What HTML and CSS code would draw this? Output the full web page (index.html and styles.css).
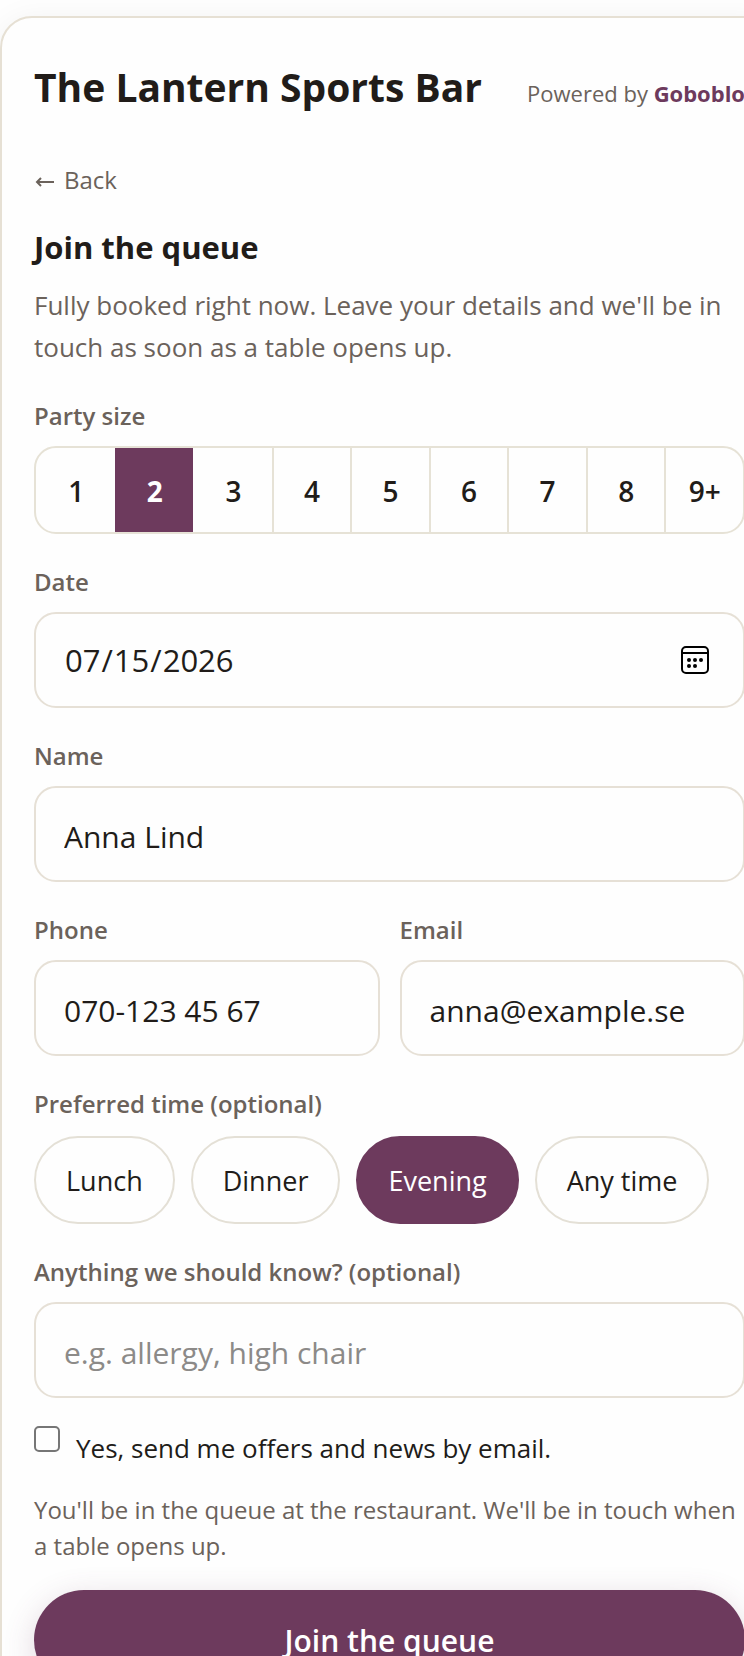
FILE: index.html
```html
<!DOCTYPE html>
<html lang="en">
  <head>
    <meta charset="UTF-8" />
    <meta name="viewport" content="width=device-width, initial-scale=1.0" />
    <title>Join the queue - The Lantern Sports Bar</title>
    <link rel="stylesheet" href="styles.css">
  </head>
  <body>
    <main class="card">
      <header class="card-header">
        <h1>The Lantern Sports Bar</h1>
        <p class="powered">Powered by <a href="#">Goboblo</a></p>
      </header>

      <button type="button" class="back-btn">
        <svg width="20" height="16" viewBox="0 0 20 16" fill="none" stroke="currentColor" stroke-width="2" aria-hidden="true">
          <path d="M20 10H3M7 6l-4 4 4 4" />
        </svg>
        Back
      </button>

      <h2>Join the queue</h2>
      <p class="intro">
        Fully booked right now. Leave your details and we'll be in touch as
        soon as a table opens up.
      </p>

      <form id="queueForm">
        <div class="field" role="group" aria-labelledby="partyLabel">
          <span class="label" id="partyLabel">Party size</span>
          <div class="party">
            <button type="button">1</button>
            <button type="button" class="active" aria-pressed="true">2</button>
            <button type="button">3</button>
            <button type="button">4</button>
            <button type="button">5</button>
            <button type="button">6</button>
            <button type="button">7</button>
            <button type="button">8</button>
            <button type="button">9+</button>
          </div>
        </div>

        <div class="field">
          <label class="label" for="date">Date</label>
          <input type="date" id="date" name="date" value="2026-07-15" />
        </div>

        <div class="field">
          <label class="label" for="name">Name</label>
          <input type="text" id="name" name="name" value="Anna Lind" />
        </div>

        <div class="row">
          <div class="field">
            <label class="label" for="phone">Phone</label>
            <input type="tel" id="phone" name="phone" value="070-123 45 67" />
          </div>
          <div class="field">
            <label class="label" for="email">Email</label>
            <input type="email" id="email" name="email" value="anna@example.se" />
          </div>
        </div>

        <div class="field" role="group" aria-labelledby="timeLabel">
          <span class="label" id="timeLabel">Preferred time (optional)</span>
          <div class="chips">
            <button type="button">Lunch</button>
            <button type="button">Dinner</button>
            <button type="button" class="active" aria-pressed="true">Evening</button>
            <button type="button">Any time</button>
          </div>
        </div>

        <div class="field">
          <label class="label" for="note">Anything we should know? (optional)</label>
          <input type="text" id="note" name="note" placeholder="e.g. allergy, high chair" />
        </div>

        <div class="consent">
          <input type="checkbox" id="offers" name="offers" />
          <label for="offers">Yes, send me offers and news by email.</label>
        </div>

        <p class="hint">
          You'll be in the queue at the restaurant. We'll be in touch when a
          table opens up.
        </p>

        <button type="submit" class="submit-btn">Join the queue</button>
      </form>
    </main>
  </body>
</html>
```

FILE: styles.css
```css
* {
  margin: 0;
  padding: 0;
  box-sizing: border-box;
}

body {
  height: 100vh;
  overflow: hidden;
  font-family: "Segoe UI", "Open Sans", sans-serif;
  background-color: #fefefe;
  color: #211c19;
}

button,
input {
  font-family: inherit;
  color: inherit;
}

button {
  cursor: pointer;
}

/* The card runs past the right edge of the window */
.card {
  margin: 16px -35px 0 0;
  padding: 40px 32px;
  background-color: #fefefe;
  border: 2px solid #e6e0d4;
  border-radius: 32px;
  box-shadow: 0 4px 32px rgba(0, 0, 0, 0.06);
}

.card-header {
  display: flex;
  justify-content: space-between;
  align-items: baseline;
  margin-bottom: 46px;
}

h1 {
  font-size: 39px;
  line-height: 58px;
}

.powered {
  font-size: 22px;
  color: #6b625b;
}

.powered a {
  color: #6d3a5d;
  font-weight: bold;
  text-decoration: none;
}

.back-btn {
  display: flex;
  align-items: center;
  gap: 10px;
  margin-bottom: 28px;
  background: none;
  border: none;
  font-size: 24px;
  line-height: 36px;
  color: #6b625b;
}

h2 {
  margin-bottom: 16px;
  font-size: 31px;
  line-height: 42px;
}

.intro {
  margin-bottom: 30px;
  font-size: 26px;
  line-height: 42px;
  color: #6b625b;
}

.field {
  display: flex;
  flex-direction: column;
  margin-bottom: 30px;
}

.label {
  margin-bottom: 12px;
  font-size: 24px;
  font-weight: 600;
  line-height: 36px;
  color: #6b625b;
}

.party {
  display: grid;
  grid-template-columns: repeat(9, 1fr);
  height: 88px;
  border: 2px solid #e6e2d6;
  border-radius: 22px;
  overflow: hidden;
}

.party button {
  padding-top: 2px;
  background: none;
  border: none;
  border-left: 2px solid #e6e2d6;
  font-size: 28px;
  font-weight: 600;
}

.party button:first-child,
.party .active + button {
  border-left-color: transparent;
}

.party .active {
  background-color: #6d3a5d;
  border-left-color: #6d3a5d;
  color: white;
  font-weight: bold;
}

.field input {
  width: 100%;
  height: 96px;
  padding: 4px 28px 0;
  background: none;
  border: 2px solid #e6e0d6;
  border-radius: 22px;
  font-size: 30px;
}

.field input::placeholder {
  color: #8c8a88;
}

.field input[type="date"] {
  padding-top: 0;
  font-size: 31px;
}

input[type="date"]::-webkit-calendar-picker-indicator {
  width: 32px;
  height: 32px;
  margin-right: 4px;
  padding: 0;
  background: url("data:image/svg+xml,%3Csvg xmlns='http://www.w3.org/2000/svg' viewBox='0 0 32 32'%3E%3Crect x='3' y='3' width='26' height='26' rx='4' fill='none' stroke='black' stroke-width='2'/%3E%3Cpath d='M3 9h26' stroke='black' stroke-width='2'/%3E%3Ccircle cx='10' cy='16' r='2'/%3E%3Ccircle cx='16' cy='16' r='2'/%3E%3Ccircle cx='22' cy='16' r='2'/%3E%3Ccircle cx='10' cy='22' r='2'/%3E%3Ccircle cx='16' cy='22' r='2'/%3E%3C/svg%3E") center / 32px 32px no-repeat;
}

.row {
  display: grid;
  grid-template-columns: 1fr 1fr;
  gap: 20px;
}

.chips {
  display: flex;
  gap: 16px;
  margin-top: 2px;
}

.chips button {
  height: 88px;
  padding: 0 30px;
  background: none;
  border: 2px solid #e4e0d6;
  border-radius: 44px;
  font-size: 27px;
}

.chips .active {
  background-color: #6d3a5d;
  border-color: #6d3a5d;
  color: white;
}

.consent {
  display: flex;
  align-items: flex-start;
  gap: 16px;
  margin: -2px 0 24px;
}

.consent input {
  flex: none;
  appearance: none;
  width: 26px;
  height: 26px;
  border: 2px solid #767676;
  border-radius: 5px;
}

.consent label {
  padding-top: 2px;
  font-size: 26px;
  line-height: 40px;
}

.hint {
  margin-bottom: 26px;
  font-size: 24px;
  line-height: 36px;
  color: #6b625b;
}

.submit-btn {
  width: 100%;
  height: 100px;
  background-color: #6d3a5d;
  border: none;
  border-radius: 50px;
  box-shadow: 0 8px 32px rgba(109, 58, 93, 0.2);
  color: white;
  font-size: 30px;
  font-weight: 600;
}
```
